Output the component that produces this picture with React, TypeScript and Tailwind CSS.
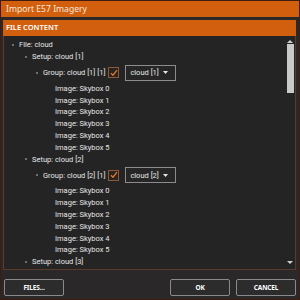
import type { ReactNode } from 'react'

const font = "font-['Noto_Sans','Open_Sans',sans-serif]"

function Bullet() {
  return <span className="mr-[5px] inline-block h-[2px] w-[2px] shrink-0 bg-[#707070]" />
}

function Row({ indent, bullet = true, children, tall = false }: { indent: number; bullet?: boolean; children: ReactNode; tall?: boolean }) {
  return (
    <div className={`flex items-center whitespace-nowrap ${tall ? 'h-[20px]' : 'h-[11.8px]'}`} style={{ paddingLeft: indent }}>
      {bullet && <Bullet />}
      {children}
    </div>
  )
}

function Group({ label, value }: { label: string; value: string }) {
  return (
    <Row indent={32} tall>
      <span>{label}</span>
      <span className="ml-[3px] flex h-[11px] w-[11px] items-center justify-center border border-[#8a5a3a] bg-[#2a2420]">
        <svg width="8" height="8" viewBox="0 0 8 8">
          <path d="M1 4.2 L3 6.2 L7 1.2" fill="none" stroke="#e0782a" strokeWidth="1.3" />
        </svg>
      </span>
      <span className="ml-[6px] flex h-[16px] w-[51px] items-center justify-between border border-[#8c8c8c] bg-[#262626] pl-[4px] pr-[7px]">
        <span>{value}</span>
        <svg width="5" height="3" viewBox="0 0 5 3">
          <path d="M0 0 H5 L2.5 3 Z" fill="#e8e8e8" />
        </svg>
      </span>
    </Row>
  )
}

function Setup({ n }: { n: number }) {
  return (
    <>
      <Row indent={21}>Setup: cloud [{n}]</Row>
      <Group label={`Group: cloud [${n}] [1]`} value={`cloud [${n}]`} />
      {[0, 1, 2, 3, 4, 5].map(i => (
        <Row key={i} indent={51} bullet={false}>Image: Skybox {i}</Row>
      ))}
    </>
  )
}

function Button({ children, className = '' }: { children: ReactNode; className?: string }) {
  return (
    <button className={`flex h-[17px] w-[60px] items-center justify-center rounded-[2px] border border-[#8a8a8a] bg-[#2c2c2c] text-[6.5px] font-bold tracking-tight text-white ${className}`}>
      {children}
    </button>
  )
}

export default function App() {
  return (
    <div className={`flex h-[300px] w-[300px] flex-col border border-[#3e1c10] bg-[#2a2828] ${font}`}>
      <div className="flex h-[16px] shrink-0 items-center bg-[#d25f0e] pl-[5px] text-[8.6px] text-[#f6e6da]">Import E57 Imagery</div>
      <div className="flex flex-1 flex-col pl-[2px] pr-[3px] pt-[3px]">
        <div className="flex h-[16px] items-center bg-[#d25f0e] pl-[3px] text-[7.5px] font-semibold text-white">FILE CONTENT</div>
        <div className="relative flex h-[234px] border border-t-0 border-[#5a3a28] bg-[#242424] font-['Roboto',sans-serif] text-[7.5px] text-[#e6e6e6]">
          <div className="flex-1 overflow-hidden pt-[3px]">
            <Row indent={8}>File: cloud</Row>
            <Setup n={1} />
            <Setup n={2} />
            <Row indent={21}>Setup: cloud [3]</Row>
          </div>
          <div className="flex w-[10px] flex-col items-center pt-[4px] pb-[5px]">
            <svg width="6" height="3" viewBox="0 0 6 3"><path d="M0 3 L3 0 L6 3 Z" fill="#d0d0d0" /></svg>
            <div className="mt-[1px] h-[49px] w-[7px] bg-[#c9c9c9]" />
            <div className="flex-1" />
            <svg width="6" height="3" viewBox="0 0 6 3"><path d="M0 0 L6 0 L3 3 Z" fill="#d0d0d0" /></svg>
          </div>
        </div>
        <div className="mt-[9px] flex items-center">
          <Button className="ml-[1px]">FILES...</Button>
          <div className="flex-1" />
          <Button>OK</Button>
          <Button className="ml-[6px]">CANCEL</Button>
        </div>
      </div>
    </div>
  )
}
